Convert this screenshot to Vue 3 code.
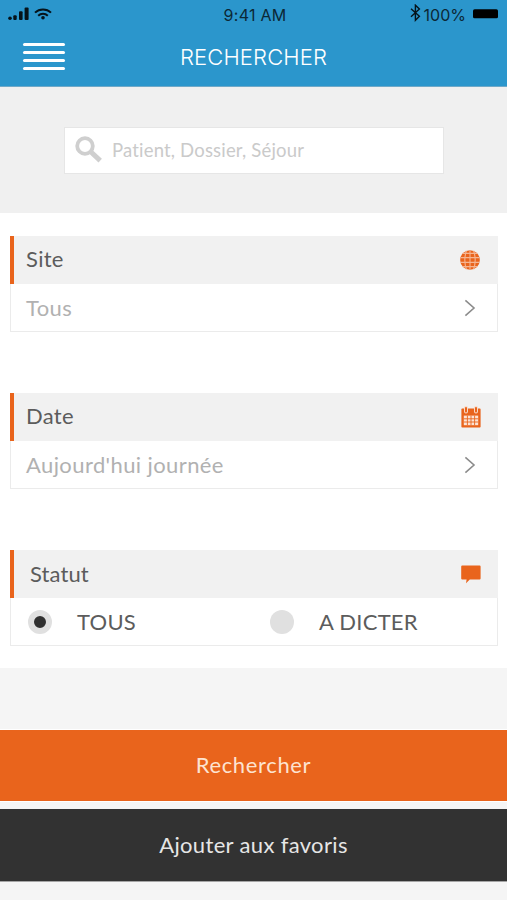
<template>
  <div class="screen">
    <header class="topbar">
      <div class="status">
        <div class="status-left">
          <svg class="signal" width="21" height="14" viewBox="0 0 21 14">
            <circle cx="2" cy="11.3" r="1.8" />
            <rect x="5.3" y="8.2" width="3.4" height="4.8" rx="1" />
            <rect x="11" y="4.2" width="3.6" height="8.8" rx="1" />
            <rect x="16.6" y="0.4" width="4" height="12.6" rx="1" />
          </svg>
          <svg class="wifi" width="18" height="12" viewBox="0 0 18 12">
            <path d="M1 4.6a11.6 11.6 0 0 1 16 0" />
            <path d="M4.2 7.7a7 7 0 0 1 9.6 0" />
            <circle cx="9" cy="9.8" r="1.8" />
          </svg>
        </div>
        <span class="time">9:41 AM</span>
        <div class="status-right">
          <svg class="bluetooth" width="11" height="18" viewBox="0 0 11 18">
            <path d="M1 4.8l8.4 7.4-4 4V1.2l4 3.9L1 12.8" />
          </svg>
          <span class="percent">100%</span>
          <svg class="battery" width="28" height="10" viewBox="0 0 28 10">
            <rect x="0" y="0.3" width="25" height="9" rx="1.6" />
          </svg>
        </div>
      </div>
      <div class="nav">
        <button class="burger" aria-label="Menu">
          <span v-for="n in 4" :key="n" />
        </button>
        <h1>RECHERCHER</h1>
      </div>
    </header>

    <section class="search">
      <label class="search-box">
        <svg width="28" height="28" viewBox="0 0 28 28">
          <circle cx="10" cy="10" r="7.8" />
          <path class="handle" d="M16 16l9.2 8.6" />
        </svg>
        <input type="text" placeholder="Patient, Dossier, Séjour">
      </label>
    </section>

    <main class="filters">
      <section v-for="f in filters" :key="f.id" class="card" :class="f.id">
        <div class="card-head">
          <h2>{{ f.title }}</h2>
          <svg v-if="f.id === 'site'" class="icon" width="20" height="22" viewBox="0 0 20 22">
            <circle cx="10" cy="11" r="9.8" fill="#e9641c" />
            <g fill="none" stroke="#f5b592" stroke-width="1.1">
              <path d="M10 1.2v19.6M1 8.6h18M1 13.4h18M2.8 17.6h14.4M2.8 4.4h14.4" />
              <path d="M6.4 1.8C4.4 7.6 4.4 14.4 6.4 20.2M13.6 1.8c2 5.8 2 12.6 0 18.4" />
            </g>
          </svg>
          <svg v-else-if="f.id === 'date'" class="icon" width="20" height="22" viewBox="0 0 20 22">
            <rect x="0.4" y="2.6" width="19.2" height="19" rx="0.8" fill="#e9641c" />
            <path d="M2.8 9.6h14.4v9.6H2.8z" fill="#fce3d5" />
            <path d="M6.4 9.6v9.6M10 9.6v9.6M13.6 9.6v9.6M2.8 12.8h14.4M2.8 16h14.4" stroke="#e9641c" stroke-width="0.9" />
            <g stroke-linecap="round">
              <path d="M5 2v3.6M15 2v3.6" stroke="#f9d9c7" stroke-width="4" />
              <path d="M5 2v3.4M15 2v3.4" stroke="#e9641c" stroke-width="2" />
            </g>
          </svg>
          <svg v-else class="icon" width="20" height="22" viewBox="0 0 20 22">
            <path d="M1.2 2.4h17.4a1 1 0 0 1 1 1v12a1 1 0 0 1-1 1H8.8L5 20.2l.6-3.8H1.2a1 1 0 0 1-1-1v-12a1 1 0 0 1 1-1z" fill="#e9641c" />
          </svg>
        </div>
        <div v-if="f.options" class="card-row radios">
          <label v-for="o in f.options" :key="o" class="radio" @click="status = o">
            <span class="dot" :class="{ checked: status === o }" />
            <span class="radio-text">{{ o }}</span>
          </label>
        </div>
        <div v-else class="card-row">
          <span class="value">{{ f.value }}</span>
          <svg class="chevron" width="12" height="18" viewBox="0 0 12 18">
            <path d="M1.4 1.4L10 9l-8.6 7.6" />
          </svg>
        </div>
      </section>
    </main>

    <footer class="actions">
      <button class="primary"><span>Rechercher</span></button>
      <button class="secondary"><span>Ajouter aux favoris</span></button>
    </footer>
  </div>
</template>

<script setup>
import { ref } from 'vue'

const status = ref('TOUS')

const filters = [
  { id: 'site', title: 'Site', value: 'Tous' },
  { id: 'date', title: 'Date', value: "Aujourd'hui journée" },
  { id: 'statut', title: 'Statut', options: ['TOUS', 'A DICTER'] }
]
</script>

<style>
body {
  margin: 0;
  background: #f5f5f5;
}
</style>

<style scoped>
.screen {
  height: 900px;
  display: flex;
  flex-direction: column;
  overflow: hidden;
  background: #f5f5f5;
  color: #5c5c5c;
  font-family: Lato, "Open Sans", sans-serif;
}

h1,
h2 {
  margin: 0;
  font-weight: 400;
}

button {
  border: 0;
  padding: 0;
  font: inherit;
}

/* Top bar */
.topbar {
  box-sizing: border-box;
  height: 87px;
  background: #2b96cc;
  border-bottom: 1px solid #6fa9c8;
}

.status {
  height: 30px;
  display: grid;
  grid-template-columns: 1fr auto 1fr;
  align-items: center;
  padding: 0 5px 0 8px;
  color: #0b2836;
  font-family: Inter, Roboto, sans-serif;
  font-size: 16px;
}

.status-left {
  display: flex;
  align-items: center;
  gap: 5px;
  padding-bottom: 3px;
}

.status-right {
  display: flex;
  align-items: center;
  justify-content: flex-end;
}

.signal {
  fill: #06131a;
}

.wifi {
  fill: #06131a;
}

.wifi path {
  fill: none;
  stroke: #06131a;
  stroke-width: 2;
}

.bluetooth {
  margin: -4px 3px 0 0;
  fill: none;
  stroke: #06131a;
  stroke-width: 1.4;
}

.battery {
  margin: -3px 1px 0 7px;
  fill: #000;
}

.time {
  letter-spacing: 0.25px;
}

.nav {
  height: 54px;
  display: grid;
  grid-template-columns: 1fr auto 1fr;
  align-items: center;
}

.burger {
  width: 42px;
  margin: -1px 0 0 23px;
  display: flex;
  flex-direction: column;
  gap: 4.7px;
  background: none;
}

.burger span {
  height: 3px;
  border-radius: 2px;
  background: #fff;
}

.nav h1 {
  color: #fff;
  font-family: Inter, Roboto, sans-serif;
  font-size: 22px;
  font-weight: 350;
  letter-spacing: 0.15px;
}

/* Search */
.search {
  box-sizing: border-box;
  height: 126px;
  padding: 40px 63px 0 64px;
  background: #f0f0f0;
}

.search-box {
  box-sizing: border-box;
  height: 47px;
  display: flex;
  align-items: center;
  padding-left: 10px;
  background: #fff;
  border: 1px solid #e6e6e6;
}

.search-box svg {
  flex: none;
  margin-bottom: 2px;
  fill: none;
  stroke: #cfcfcf;
  stroke-width: 3.8;
}

.search-box .handle {
  stroke-width: 5;
}

.search-box input {
  flex: 1;
  min-width: 0;
  margin-left: 9px;
  padding: 0 0 2px;
  border: 0;
  outline: 0;
  background: none;
  font: 18.5px Lato, sans-serif;
  letter-spacing: 0.18px;
}

.search-box input::placeholder {
  color: #cacaca;
  opacity: 1;
}

/* Filters */
.filters {
  box-sizing: border-box;
  height: 455px;
  display: flex;
  flex-direction: column;
  gap: 61.2px;
  padding: 23px 9px 0 10px;
  background: #fff;
}

.card-head {
  box-sizing: border-box;
  height: 48px;
  display: flex;
  align-items: center;
  justify-content: space-between;
  padding: 0 17px 1px 12px;
  background: #f1f1f1;
  border-left: 4px solid #e9641c;
}

.card-head h2 {
  padding-bottom: 2px;
  font-size: 22px;
  letter-spacing: 0.3px;
}

.statut .card-head {
  padding-bottom: 0;
}

.statut h2 {
  margin-left: 4px;
  padding-bottom: 1px;
  letter-spacing: 0.1px;
}

.site .icon {
  margin-right: 1px;
}

.card-row {
  box-sizing: border-box;
  height: 48px;
  display: flex;
  align-items: center;
  justify-content: space-between;
  padding: 0 21px 0 15px;
  border: 1px solid #ebebeb;
  border-top: 0;
  font-size: 22px;
}

.value {
  padding-bottom: 1px;
  color: #b1b1b1;
  letter-spacing: 0.4px;
}

.chevron {
  fill: none;
  stroke: #8c8c8c;
  stroke-width: 1.6;
}

.radios {
  display: grid;
  grid-template-columns: 242px 1fr;
  justify-content: start;
  padding: 0 0 0 17px;
}

.radio {
  display: flex;
  align-items: center;
}

.dot {
  box-sizing: border-box;
  width: 24px;
  height: 24px;
  border-radius: 50%;
  background: #e0e0e0;
}

.dot.checked {
  border: 6px solid #e0e0e0;
  background: #303030;
}

.radio-text {
  margin-left: 25px;
  padding-bottom: 1px;
  letter-spacing: 0.25px;
}

/* Bottom buttons */
.actions {
  display: flex;
  flex-direction: column;
  padding-top: 61px;
}

.actions button {
  padding-bottom: 2px;
  font-size: 22px;
}

.actions .primary {
  height: 73px;
  box-sizing: border-box;
  border-top: 1px solid #fff;
  border-bottom: 1px solid #fff;
  background: #e9641c;
  color: #fde3d0;
  letter-spacing: 0.65px;
}

.actions .secondary {
  height: 73px;
  margin-top: 7px;
  box-sizing: border-box;
  border-bottom: 1px solid #a5a5a5;
  background: #323232;
  color: #e6e6e6;
  letter-spacing: 0.35px;
}
</style>
